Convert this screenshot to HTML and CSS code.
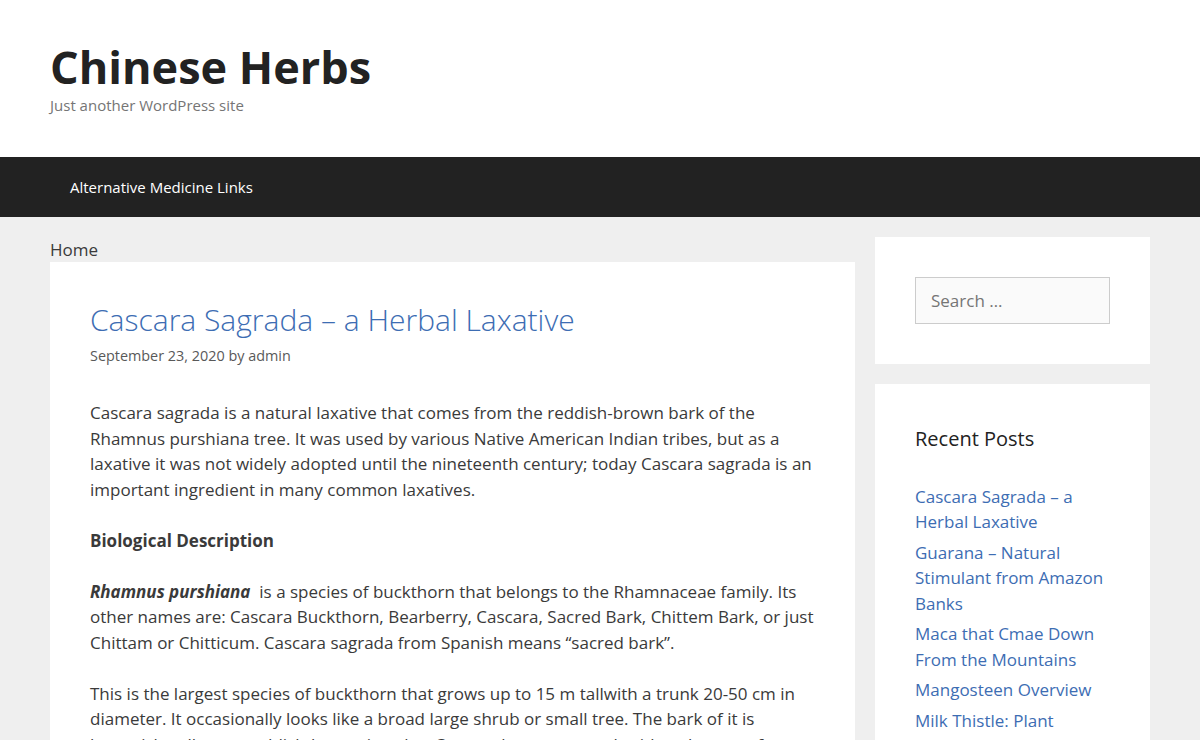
FILE: index.html
```html
<!DOCTYPE html>
<html lang="en">
<head>
<meta charset="utf-8">
<title>Cascara Sagrada – a Herbal Laxative – Chinese Herbs</title>
<link rel="stylesheet" href="styles.css">
</head>
<body>
<header class="site-header">
  <div class="inside-header">
    <p class="main-title"><a href="#">Chinese Herbs</a></p>
    <p class="site-description">Just another WordPress site</p>
  </div>
</header>
<nav class="main-navigation">
  <div class="inside-navigation">
    <ul class="menu">
      <li><a href="#">Alternative Medicine Links</a></li>
    </ul>
  </div>
</nav>
<div class="site-content">
  <main class="content-area">
    <div class="breadcrumb">Home</div>
    <article class="inside-article">
      <header class="entry-header">
        <h1 class="entry-title"><a href="#">Cascara Sagrada – a Herbal Laxative</a></h1>
        <div class="entry-meta">September 23, 2020 by admin</div>
      </header>
      <div class="entry-content">
        <p>Cascara sagrada is a natural laxative that comes from the reddish-brown bark of the Rhamnus purshiana tree. It was used by various Native American Indian tribes, but as a laxative it was not widely adopted until the nineteenth century; today Cascara sagrada is an important ingredient in many common laxatives.</p>
        <p><strong>Biological Description</strong></p>
        <p><strong><em>Rhamnus purshiana</em></strong>&nbsp; is a species of buckthorn that belongs to the Rhamnaceae family. Its other names are: Cascara Buckthorn, Bearberry, Cascara, Sacred Bark, Chittem Bark, or just Chittam or Chitticum. Cascara sagrada from Spanish means “sacred bark”.</p>
        <p>This is the largest species of buckthorn that grows up to 15 m tallwith a trunk 20-50 cm in diameter. It occasionally looks like a broad large shrub or small tree. The bark of it is brownish-yellow or reddish-brown in color. Cascara leaves are oval, with a glossy surface and a finely toothed edge.</p>
      </div>
    </article>
  </main>
  <aside class="sidebar">
    <section class="widget">
      <form class="search-form">
        <input class="search-field" type="search" placeholder="Search …">
      </form>
    </section>
    <section class="widget">
      <h2 class="widget-title">Recent Posts</h2>
      <ul class="recent-posts">
        <li><a href="#">Cascara Sagrada – a Herbal Laxative</a></li>
        <li><a href="#">Guarana – Natural Stimulant from Amazon Banks</a></li>
        <li><a href="#">Maca that Cmae Down From the Mountains</a></li>
        <li><a href="#">Mangosteen Overview</a></li>
        <li><a href="#">Milk Thistle: Plant Description and Uses</a></li>
      </ul>
    </section>
  </aside>
</div>
</body>
</html>
```

FILE: styles.css
```css
* { box-sizing: border-box; }
html, body { margin: 0; padding: 0; }
body {
  background: #efefef;
  color: #3a3a3a;
  font-family: "Open Sans", "Liberation Sans", sans-serif;
  font-size: 17px;
  line-height: 1.5;
}
a { color: #3d6db3; text-decoration: none; }
p { margin: 0 0 1.5em; }

.site-header { background: #fff; }
.inside-header {
  width: 1100px;
  margin: 0 auto;
  padding: 40px 0;
}
.main-title {
  margin: 0;
  font-size: 45px;
  font-weight: 700;
  line-height: 1.2;
}
.main-title a { color: #222; }
.site-description {
  margin: 0;
  font-size: 15px;
  line-height: 1.5;
  color: #757575;
}

.main-navigation { background: #222; }
.inside-navigation { width: 1100px; margin: 0 auto; }
.menu { list-style: none; margin: 0; padding: 0; display: flex; }
.menu a {
  display: block;
  padding: 0 20px;
  line-height: 60px;
  font-size: 15px;
  color: #fff;
}

.site-content {
  width: 1100px;
  margin: 0 auto;
  padding-top: 20px;
  display: flex;
  gap: 20px;
  align-items: flex-start;
}
.content-area { width: 805px; flex: none; }
.breadcrumb { line-height: 25px; color: #3a3a3a; }
.inside-article {
  background: #fff;
  padding: 40px;
}
.entry-title {
  margin: 0;
  font-size: 30px;
  font-weight: 300;
  line-height: 1.2;
}
.entry-title a { color: #3d6db3; }
.entry-meta {
  margin-top: 7px;
  font-size: 14.4px;
  line-height: 1.5;
  color: #595959;
}
.entry-content { margin-top: 34px; }

.sidebar { width: 275px; flex: none; display: flex; flex-direction: column; gap: 20px; }
.widget { background: #fff; padding: 40px; }
.search-form { margin: 0; }
.search-field {
  display: block;
  width: 100%;
  height: 47px;
  padding: 10px 15px;
  background: #fafafa;
  border: 1px solid #ccc;
  border-radius: 0;
  font-family: inherit;
  font-size: 17px;
  line-height: 1.5;
  color: #666;
  outline: none;
}
.search-field::placeholder { color: #757575; opacity: 1; }
.widget-title {
  margin: 0 0 30px;
  font-size: 20px;
  font-weight: 400;
  line-height: 1.5;
  color: #222;
}
.recent-posts { list-style: none; margin: 0; padding: 0; }
.recent-posts li { margin-bottom: 5px; }
```
